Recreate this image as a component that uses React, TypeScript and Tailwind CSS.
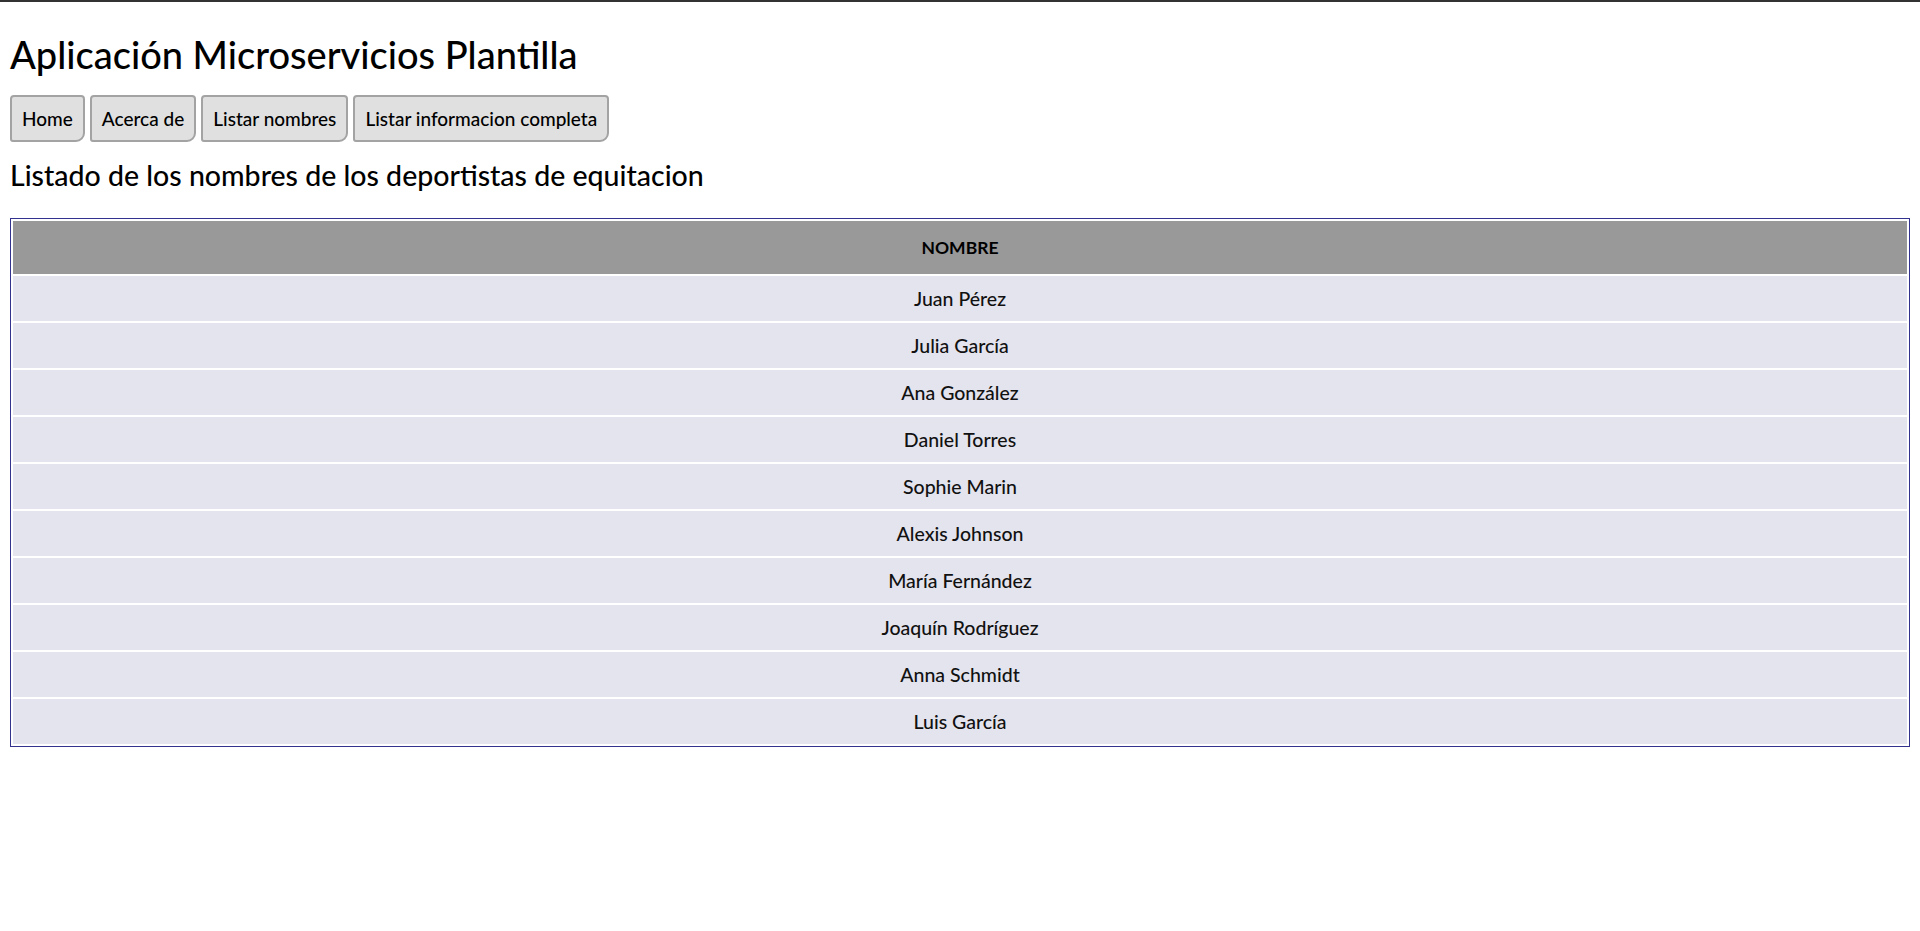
import React from "react";

const names = [
  "Juan Pérez",
  "Julia García",
  "Ana González",
  "Daniel Torres",
  "Sophie Marin",
  "Alexis Johnson",
  "María Fernández",
  "Joaquín Rodríguez",
  "Anna Schmidt",
  "Luis García",
];

const buttons = ["Home", "Acerca de", "Listar nombres", "Listar informacion completa"];

export default function App() {
  return (
    <div className="min-h-[931px] bg-white font-['Lato',sans-serif] font-medium text-black">
      <div className="h-[2px] bg-[#333333]" />
      <div className="px-[10px]">
        <h1 className="mt-[30px] text-[38px] leading-[44px] font-medium">
          Aplicación Microservicios Plantilla
        </h1>
        <div className="mt-[19px] flex gap-[5px]">
          {buttons.map((b) => (
            <button
              key={b}
              className="h-[47px] border-2 border-[#a3a3a3] bg-[#e0e0e0] px-[10px] text-[19px] leading-[23px] text-black rounded-tl-[4px] rounded-tr-[4px] rounded-bl-[3px] rounded-br-[9px]"
            >
              {b}
            </button>
          ))}
        </div>
        <h2 className="mt-[17px] text-[28.5px] leading-[32px] font-medium">
          Listado de los nombres de los deportistas de equitacion
        </h2>
        <table className="mt-[27px] w-full border border-[#33338f] border-separate border-spacing-[2px] text-[19.5px] leading-[23px]">
          <thead>
            <tr>
              <th className="h-[53px] bg-[#999999] text-center font-bold text-black text-[17.5px]">NOMBRE</th>
            </tr>
          </thead>
          <tbody>
            {names.map((n) => (
              <tr key={n}>
                <td className="h-[45px] bg-[#e4e4ee] text-center text-[#111111]">{n}</td>
              </tr>
            ))}
          </tbody>
        </table>
      </div>
    </div>
  );
}
